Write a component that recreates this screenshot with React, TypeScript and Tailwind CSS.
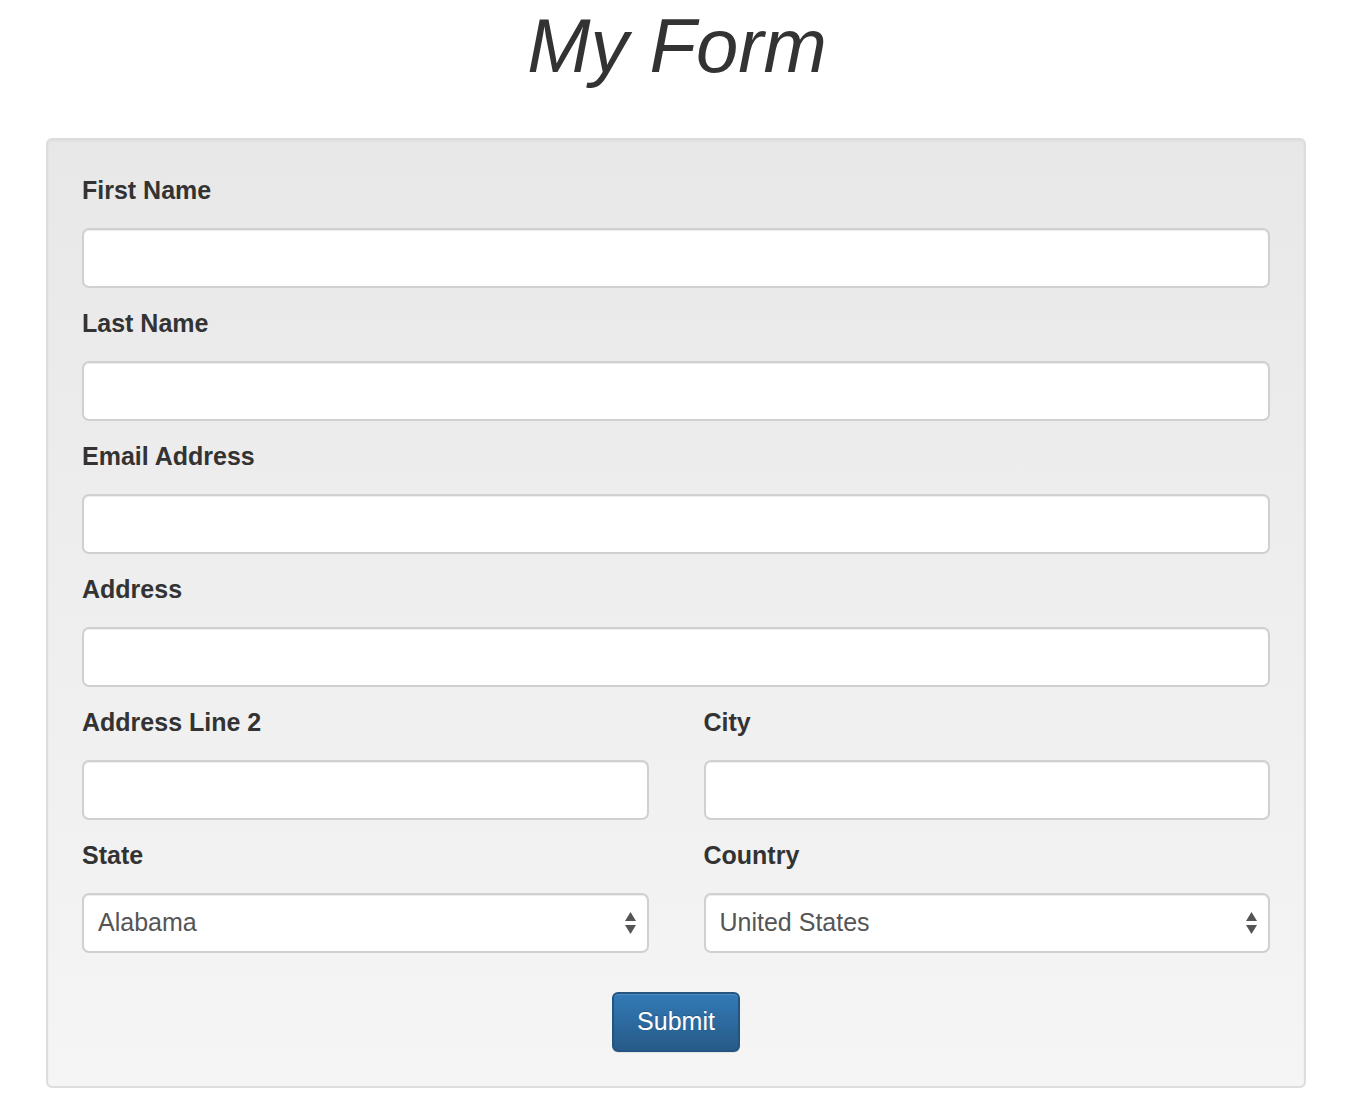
import React, { useState } from 'react'

const states = ['Alabama', 'Alaska', 'Arizona', 'Arkansas', 'California', 'Colorado']
const countries = ['United States', 'Canada', 'Mexico']

const Field = ({ label, children }: { label: string; children: React.ReactNode }) => (
  <div className="mb-[18px]">
    <label className="block text-[25px] leading-[35px] font-bold text-[#333] mb-[20px]">{label}</label>
    {children}
  </div>
)

const inputCls =
  'block w-full h-[60px] rounded-[7px] border-2 border-[#d0d0d0] bg-white px-[14px] text-[25px] text-[#555] shadow-[inset_0_1px_1px_rgba(0,0,0,0.075)] outline-none'

const Select = ({ value, options, onChange }: { value: string; options: string[]; onChange: (v: string) => void }) => (
  <div className="relative">
    <select
      value={value}
      onChange={e => onChange(e.target.value)}
      className={inputCls + ' appearance-none pr-[40px]'}
    >
      {options.map(o => (
        <option key={o}>{o}</option>
      ))}
    </select>
    {/* up/down arrows */}
    <svg className="pointer-events-none absolute right-[12px] top-[18px]" width="13" height="24" viewBox="0 0 13 24">
      <path d="M6.5 1 L12 10 L1 10 Z" fill="#555" />
      <path d="M1 14 L12 14 L6.5 23 Z" fill="#555" />
    </svg>
  </div>
)

const App = () => {
  const [state, setState] = useState('Alabama')
  const [country, setCountry] = useState('United States')

  return (
    <div className="min-h-screen bg-white" style={{ fontFamily: '"Liberation Sans", Arial, sans-serif' }}>
      <h1 className="pt-[5px] pl-[4px] text-center text-[76px] leading-[82px] italic font-normal text-[#333]">My Form</h1>

      <form
        className="ml-[46px] mt-[51px] w-[1260px] rounded-[6px] border-2 border-[#dddddd] bg-gradient-to-b from-[#e8e8e8] to-[#f5f5f5] px-[34px] pt-[33px] pb-[34px] shadow-[inset_0_1px_3px_rgba(0,0,0,0.05)]"
        onSubmit={e => e.preventDefault()}
      >
        <Field label="First Name">
          <input type="text" className={inputCls} />
        </Field>
        <Field label="Last Name">
          <input type="text" className={inputCls} />
        </Field>
        <Field label="Email Address">
          <input type="email" className={inputCls} />
        </Field>
        <Field label="Address">
          <input type="text" className={inputCls} />
        </Field>

        <div className="grid grid-cols-2 gap-x-[55px]">
          <Field label="Address Line 2">
            <input type="text" className={inputCls} />
          </Field>
          <Field label="City">
            <input type="text" className={inputCls} />
          </Field>
          <Field label="State">
            <Select value={state} options={states} onChange={setState} />
          </Field>
          <Field label="Country">
            <Select value={country} options={countries} onChange={setCountry} />
          </Field>
        </div>

        <div className="mt-[21px] flex justify-center">
          <button
            type="submit"
            className="h-[60px] w-[128px] rounded-[6px] border-2 border-[#245580] bg-gradient-to-b from-[#337ab7] to-[#265a88] text-[25px] text-white [text-shadow:0_-1px_0_rgba(0,0,0,0.2)] shadow-[inset_0_1px_0_rgba(255,255,255,0.15),0_1px_1px_rgba(0,0,0,0.075)]"
          >
            Submit
          </button>
        </div>
      </form>
    </div>
  )
}

export default App
